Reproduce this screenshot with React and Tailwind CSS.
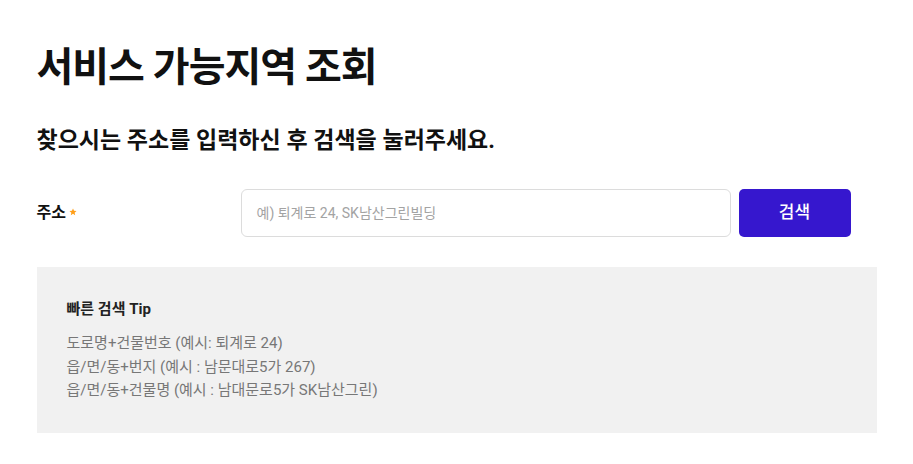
import React from "react";

export default function App() {
  const font = { fontFamily: 'Roboto, "Noto Sans CJK KR", sans-serif' };
  return (
    <div className="min-h-[464px] bg-white text-[#111]" style={font}>
      <div className="w-[840px] mx-auto pt-[44px]">
        <h1 className="text-[40px] leading-[48px] font-bold tracking-[-1px] text-[#111]">서비스 가능지역 조회</h1>
        <h2 className="mt-[34px] text-[23px] leading-[30px] font-bold text-[#111]">찾으시는 주소를 입력하신 후 검색을 눌러주세요.</h2>
        <div className="mt-[33px] flex items-center">
          <div className="w-[204px] flex items-center text-[16px] font-bold text-[#111]">
            주소
            <svg className="ml-[3px] mt-[-2px]" width="8" height="8" viewBox="0 0 24 24">
              <path fill="#ff9f1a" d="M12 1.5l3.1 6.9 7.4.7-5.6 5 1.7 7.4L12 17.6 5.4 21.5l1.7-7.4-5.6-5 7.4-.7z" />
            </svg>
          </div>
          <div className="w-[490px] h-[48px] border border-[#dcdcdc] rounded-[6px] flex items-center px-[15px]">
            <span className="text-[14px] text-[#a3a3a3]">예) 퇴계로 24, SK남산그린빌딩</span>
          </div>
          <button className="ml-[8px] w-[112px] h-[48px] rounded-[5px] bg-[#3617ce] text-white text-[17px] font-medium flex items-center justify-center">
            검색
          </button>
        </div>
        <div className="mt-[30px] h-[166px] bg-[#f1f1f1] px-[30px] pt-[32px]">
          <div className="text-[15px] leading-[20px] font-bold text-[#222]">빠른 검색 Tip</div>
          <div className="mt-[13px] text-[15px] leading-[23.5px] text-[#777]">
            <div>도로명+건물번호 (예시: 퇴계로 24)</div>
            <div>읍/면/동+번지 (예시 : 남문대로5가 267)</div>
            <div>읍/면/동+건물명 (예시 : 남대문로5가 SK남산그린)</div>
          </div>
        </div>
      </div>
    </div>
  );
}
